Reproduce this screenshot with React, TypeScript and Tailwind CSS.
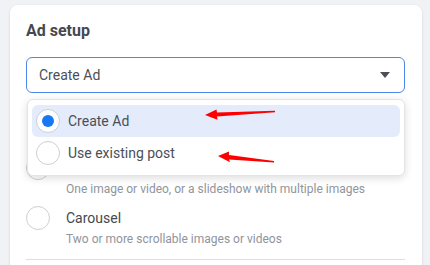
import { useState } from "react";

const formats = [
  { name: "Single image or video", copy: "One image or video, or a slideshow with multiple images" },
  { name: "Carousel", copy: "Two or more scrollable images or videos" },
];

const options = ["Create Ad", "Use existing post"];

function Radio({ checked }: { checked?: boolean }) {
  return (
    <span className="flex h-6 w-6 shrink-0 items-center justify-center rounded-full border border-[#ccd0d5] bg-white">
      {checked && <span className="h-3 w-3 rounded-full bg-[#1877f2]" />}
    </span>
  );
}

export default function App() {
  const [selected] = useState("Create Ad");

  return (
    <div className="relative h-[265px] w-[430px] overflow-hidden bg-[#f0f2f5] pl-[10px] pr-2 pt-[5px] font-['Roboto',sans-serif]">
      <div className="h-[280px] rounded-t-lg bg-white pl-4 pr-[17px] pt-4 shadow-[0_1px_3px_rgba(0,0,0,0.12)]">
        <h2 className="text-base font-bold leading-5 text-[#444950]">Ad setup</h2>

        <div className="relative mt-4">
          <div className="flex h-9 items-center justify-between rounded-md border border-[#4c86ea] pl-3 pr-[14px] text-sm text-[#4b4f56]">
            <span>{selected}</span>
            <svg width="10" height="6" viewBox="0 0 10 6" className="fill-[#4b4f56]">
              <path d="M0 0h10L5 6z" />
            </svg>
          </div>

          <div className="absolute left-[1px] right-0 top-[42px] z-10 rounded-md border border-[#e2e4e8] bg-white px-1 pb-[6px] pt-[5px] shadow-[0_2px_8px_rgba(0,0,0,0.14)]">
            {options.map((o) => (
              <div
                key={o}
                className={`flex h-8 items-center gap-2 rounded-md pl-1 pr-[1px] text-sm text-[#4b4f56] ${o === selected ? "bg-[#e4ecfb]" : ""}`}
              >
                <Radio checked={o === selected} />
                <span>{o}</span>
              </div>
            ))}
          </div>
        </div>

        <div className="mt-[63px] flex flex-col gap-[8.5px]">
          {formats.map((f) => (
            <div key={f.name} className="flex gap-4">
              <Radio />
              <div>
                <p className="text-sm leading-6 text-[#444950]">{f.name}</p>
                <p className="mt-[1px] text-xs leading-4 text-[#90949c]">{f.copy}</p>
              </div>
            </div>
          ))}
        </div>

        <div className="mt-3 h-px bg-[#dddfe2]" />
      </div>

      <svg
        className="pointer-events-none absolute left-0 top-0 z-20"
        width="430"
        height="265"
        viewBox="0 0 430 265"
      >
        <polygon fill="#ff0000" points="205,115 216.5,109.5 217,112.4 275,110.8 275,112.2 217,116.4 217.5,119.8" />
        <polygon fill="#ff0000" points="218,156 229,151.5 229,155 274,161 274,162.4 229,159.5 230,162.2" />
      </svg>
    </div>
  );
}
